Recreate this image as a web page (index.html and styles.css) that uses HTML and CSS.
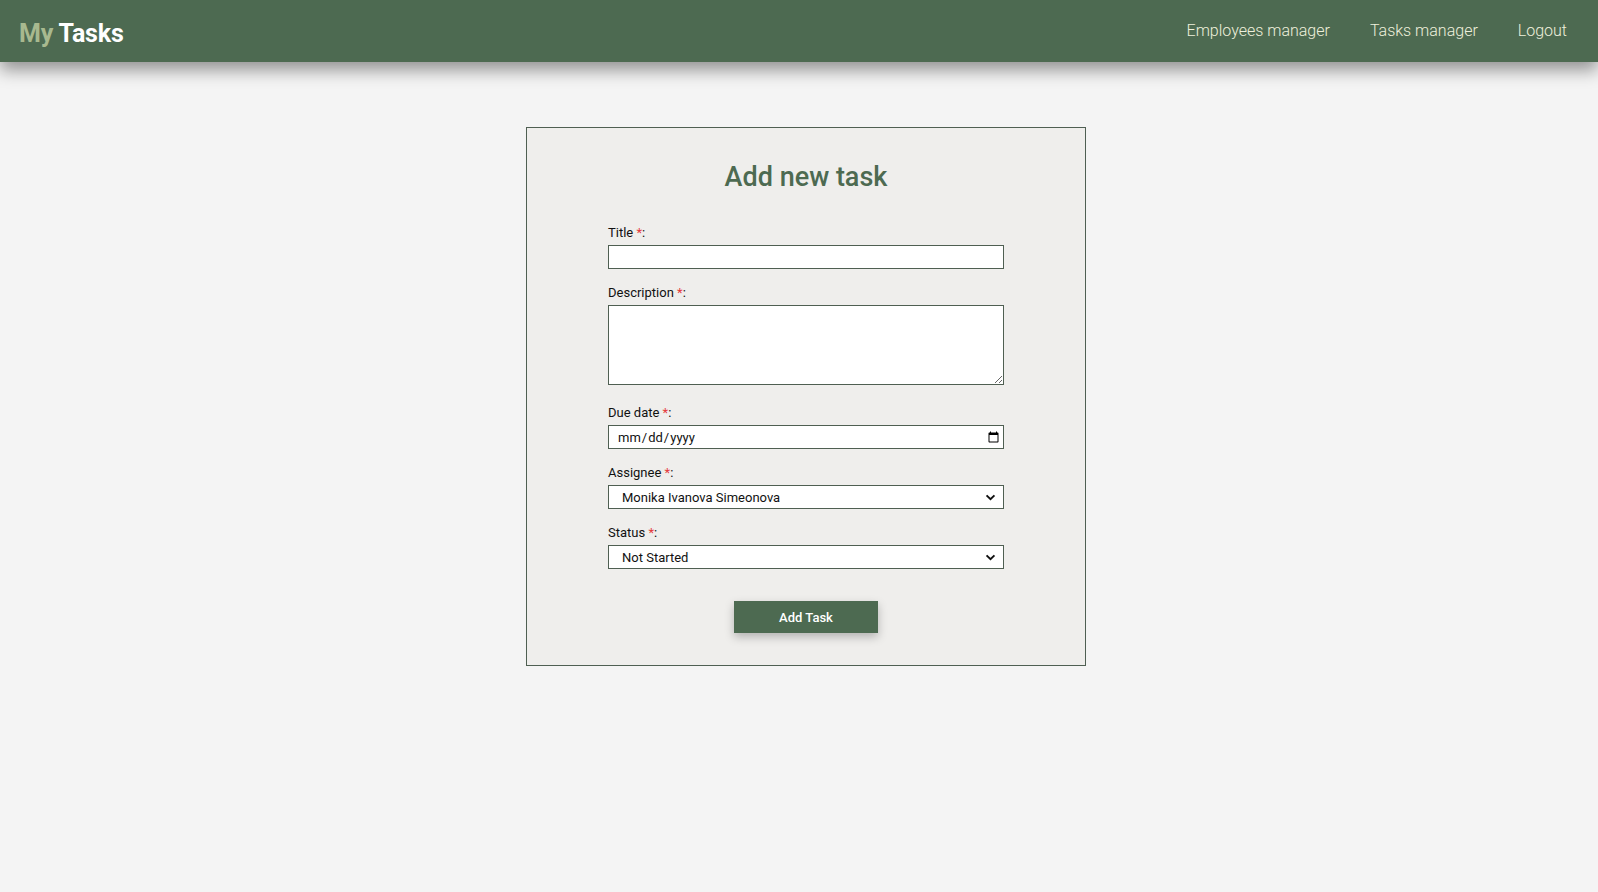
FILE: index.html
```html
<!DOCTYPE html>
<html lang="en">
<head>
<meta charset="utf-8">
<title>My Tasks</title>
<link rel="stylesheet" href="styles.css">
</head>
<body>
<header class="topbar">
  <a class="logo" href="#"><span class="logo-my">My</span> <span class="logo-tasks">Tasks</span></a>
  <nav class="nav">
    <a href="#">Employees manager</a>
    <a href="#">Tasks manager</a>
    <a href="#">Logout</a>
  </nav>
</header>
<main class="main">
  <section class="card">
    <h2 class="card-title">Add new task</h2>
    <form class="form">
      <div class="field">
        <label for="title">Title <span class="req">*</span>:</label>
        <input id="title" type="text" class="control">
      </div>
      <div class="field field-area">
        <label for="desc">Description <span class="req">*</span>:</label>
        <textarea id="desc" class="control control-area"></textarea>
      </div>
      <div class="field">
        <label for="due">Due date <span class="req">*</span>:</label>
        <input id="due" type="date" class="control control-date">
      </div>
      <div class="field">
        <label for="assignee">Assignee <span class="req">*</span>:</label>
        <select id="assignee" class="control control-select">
          <option>Monika Ivanova Simeonova</option>
        </select>
      </div>
      <div class="field">
        <label for="status">Status <span class="req">*</span>:</label>
        <select id="status" class="control control-select">
          <option>Not Started</option>
        </select>
      </div>
      <div class="actions">
        <button type="button" class="btn">Add Task</button>
      </div>
    </form>
  </section>
</main>
</body>
</html>
```
FILE: styles.css
```css
* { box-sizing: border-box; }

html, body {
  margin: 0;
  padding: 0;
}

body {
  background: #f4f4f4;
  font-family: Roboto, "Liberation Sans", Arial, sans-serif;
  color: #111;
  min-height: 892px;
}

.topbar {
  height: 62px;
  background: #4d6a51;
  display: flex;
  align-items: center;
  justify-content: space-between;
  padding: 0 31px 0 19px;
  box-shadow: 0 8px 16px rgba(0, 0, 0, 0.4);
  position: relative;
  z-index: 1;
}

.logo {
  text-decoration: none;
  font-size: 25px;
  font-weight: 700;
  letter-spacing: -0.2px;
  padding-top: 5px;
}

.logo-my { color: #a8b98f; }
.logo-tasks { color: #ffffff; }

.nav {
  display: flex;
  gap: 40px;
  padding-bottom: 1px;
}

.nav a {
  color: #eef0dc;
  text-decoration: none;
  font-size: 16px;
  font-weight: 300;
}

.main {
  display: flex;
  justify-content: center;
  padding: 65px 0 0 14px;
}

.card {
  width: 560px;
  background: #efeeec;
  border: 1px solid #4f5f52;
  padding: 33px 0 32px;
}

.card-title {
  margin: 0 0 32px;
  text-align: center;
  font-size: 27px;
  line-height: 32px;
  font-weight: 500;
  color: #4d6a51;
}

.form {
  width: 396px;
  margin: 0 auto;
}

.field {
  margin-bottom: 16px;
}

.field-area {
  margin-bottom: 20px;
}

.field label {
  display: block;
  font-size: 13px;
  line-height: 15px;
  margin-bottom: 5px;
  color: #111;
}

.req { color: #e5393b; }

.control {
  display: block;
  width: 100%;
  height: 24px;
  margin: 0;
  border: 1px solid #4f5f52;
  border-radius: 0;
  background: #ffffff;
  font-family: Roboto, "Liberation Sans", Arial, sans-serif;
  font-size: 13px;
  color: #111;
  padding: 0 8px;
  outline: none;
}

.control-area {
  height: 80px;
  resize: vertical;
  padding: 4px 8px;
}

.control-date {
  padding: 0 1px 0 8px;
}

.control-select {
  -webkit-appearance: none;
  appearance: none;
  padding: 0 28px 0 13px;
  background-color: #ffffff;
  background-image: url("data:image/svg+xml,%3Csvg xmlns='http://www.w3.org/2000/svg' width='12' height='8' viewBox='0 0 12 8'%3E%3Cpath d='M1.5 1.5 L6 6 L10.5 1.5' fill='none' stroke='%23111' stroke-width='2.2'/%3E%3C/svg%3E");
  background-repeat: no-repeat;
  background-position: right 7px center;
  background-size: 11px 7px;
}

.actions {
  display: flex;
  justify-content: center;
  margin-top: 32px;
}

.btn {
  width: 144px;
  height: 32px;
  border: none;
  background: #4d6a51;
  color: #ffffff;
  font-family: Roboto, "Liberation Sans", Arial, sans-serif;
  font-size: 13px;
  font-weight: 500;
  box-shadow: 0 4px 10px rgba(0, 0, 0, 0.25);
  cursor: pointer;
}
```
